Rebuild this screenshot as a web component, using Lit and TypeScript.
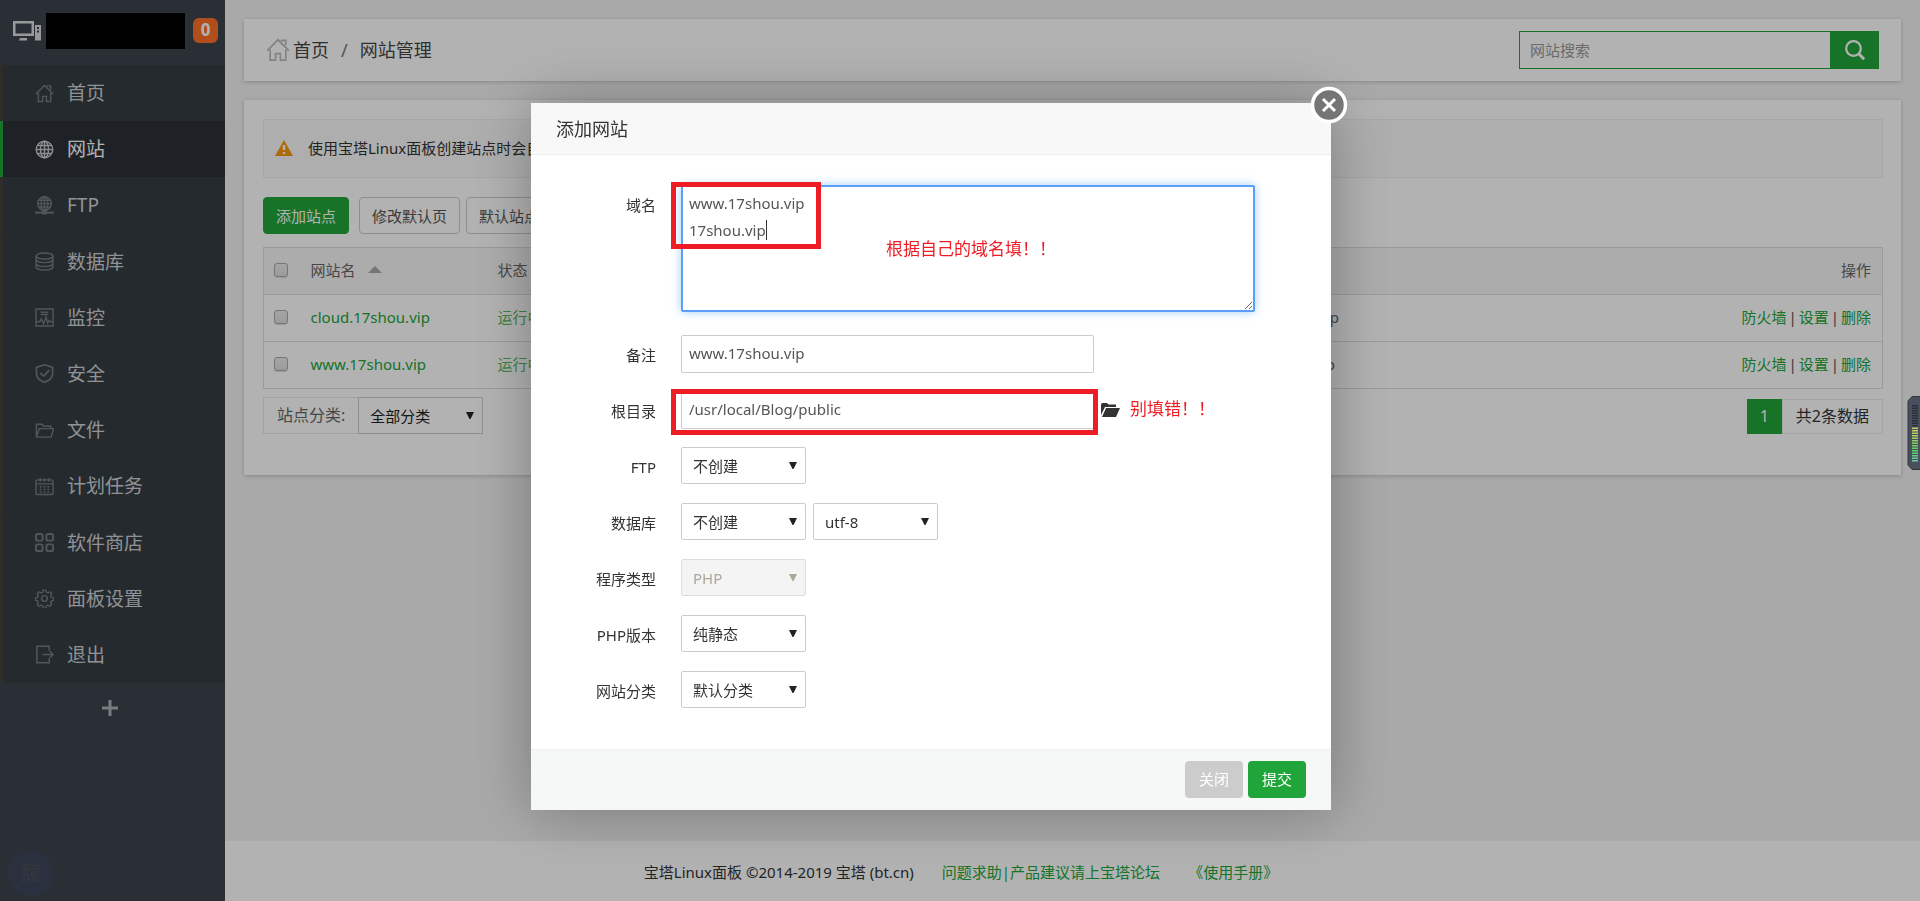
import { LitElement, html, svg, css } from "lit";
import { customElement, property } from "lit/decorators.js";

const icons: Record<string, unknown> = {
  home: svg`<path d="M1 10.500 10 1.500l9 9M3.500 9.500V18.500H8v-5.500h4v5.500h4.500V9.500M13 3V2h3.500v4"/>`,
  globe: svg`<circle cx="10" cy="10" r="8.700"/><ellipse cx="10" cy="10" rx="4.200" ry="8.700"/><path d="M10 1.300v17.400M1.300 10h17.400M3 5.700h14M3 14.300h14"/>`,
  ftp: svg`<circle cx="10" cy="8" r="7.200"/><ellipse cx="10" cy="8" rx="3.500" ry="7.200"/><path d="M10 1v14M3 8h14M4 4.500h12M4 11.500h12"/><path d="M0 17.500h20" stroke-width="2"/><path d="M7.500 17.500h5" stroke-width="4"/>`,
  db: svg`<ellipse cx="10" cy="4.200" rx="8.800" ry="3.200"/><path d="M1.200 4.200v11.600c0 1.800 3.900 3.200 8.800 3.200s8.800-1.400 8.800-3.200V4.200M1.200 8c0 1.800 3.900 3.200 8.800 3.200S18.800 9.800 18.800 8M1.200 12c0 1.800 3.900 3.200 8.800 3.200s8.800-1.400 8.800-3.200"/>`,
  monitor: svg`<path d="M1 1h18v18H1z"/><path d="M6 4.500h8M6 6.800h8"/><path d="M1 14.500h4l1.500-3 2.500 5 2.500-7 2 6.500 1.500-3 1.500 1.500H19"/>`,
  shield: svg`<path d="M10 .8 1.500 3.500V10c0 4.500 3.500 7.500 8.500 9.300 5-1.800 8.500-4.800 8.500-9.300V3.500zM5.500 9.500l3.700 3.300L15 6.500" stroke-width="1.800"/>`,
  folder: svg`<path d="M1.500 16.500V3.500h6l1.500 2h7.500V8M1.500 17 4.500 8h15L17 17z"/>`,
  calendar: svg`<rect x="1" y="3" width="18" height="15.500" rx="2"/><path d="M1 7.200h18M5.500 1v4M10 1v4M14.500 1v4"/><path d="M5 10.200h11M5 13h11M5 15.700h11" stroke-dasharray="2 2"/>`,
  apps: svg`<g stroke-width="2"><rect x="1" y="1" width="7" height="7" rx="2"/><rect x="12" y="1" width="7" height="7" rx="2"/><rect x="1" y="12" width="7" height="7" rx="2"/><rect x="12" y="12" width="7" height="7" rx="2"/></g>`,
  gear: svg`<circle cx="10" cy="10" r="3"/><path d="M8.500 1.200h3l.5 2.400 1.900.8 2.100-1.300 2.100 2.100-1.300 2.100.8 1.900 2.400.5v3l-2.400.5-.8 1.900 1.300 2.100-2.100 2.100-2.100-1.300-1.900.8-.5 2.400h-3l-.5-2.400-1.900-.8L4 19.300l-2.100-2.100 1.300-2.100-.8-1.900L0 12.700v-3l2.400-.5.8-1.900L1.900 5.200 4 3.100l2.100 1.300L8 3.600z" transform="translate(.5 0) scale(.95)"/>`,
  exit: svg`<path d="M15 6V1.200H2v17.600h13V14" stroke-width="1.600"/><path d="M8 10h11M15.500 6.500 19 10l-3.500 3.500" stroke-width="1.600"/>`,
};

const menu = [
  ["home", "首页"],
  ["globe", "网站"],
  ["ftp", "FTP"],
  ["db", "数据库"],
  ["monitor", "监控"],
  ["shield", "安全"],
  ["folder", "文件"],
  ["calendar", "计划任务"],
  ["apps", "软件商店"],
  ["gear", "面板设置"],
  ["exit", "退出"],
];

const base = css`
  :host {
    font-family: "Noto Sans", "Noto Sans CJK SC", sans-serif;
    font-size: 15px;
    line-height: 24px;
    color: #333;
  }
  *, *::before, *::after { box-sizing: border-box; }
  a { color: #20a53a; text-decoration: none; }
  button, input, select, textarea { font: inherit; margin: 0; }
  svg { display: block; }
`;

@customElement("drop-down")
class DropDown extends LitElement {
  @property() value = "";
  @property() name = "";
  @property({ type: Boolean }) disabled = false;
  @property({ type: Boolean }) square = false;

  static styles = [
    base,
    css`
      :host { display: block; width: 125px; }
      .wrap { position: relative; }
      .box {
        appearance: none;
        display: block;
        width: 100%;
        height: 37px;
        padding: 0 24px 0 11px;
        border: 1px solid #ccc;
        border-radius: 2px;
        background: #fff;
        color: #333;
        opacity: 1;
      }
      .square { border-radius: 0; color: #222; }
      .box:disabled { background: #f4f4f4; color: #aca899; border-color: #ddd; }
      .arrow {
        position: absolute;
        right: 9px;
        top: 15px;
        pointer-events: none;
        fill: #222;
      }
      .box:disabled + .arrow { fill: #aca899; }
    `,
  ];

  render() {
    return html`<div class="wrap">
      <select class="box ${this.square ? "square" : ""}" aria-label=${this.name} ?disabled=${this.disabled}>
        <option>${this.value}</option>
      </select>
      <svg class="arrow" width="8" height="7" viewBox="0 0 8 7"><path d="M0 0h8L4.500 7h-1z" /></svg>
    </div>`;
  }
}

@customElement("side-bar")
class SideBar extends LitElement {
  static styles = [
    base,
    css`
      :host {
        display: flex;
        flex-direction: column;
        background: #3c444d;
      }
      .top {
        display: flex;
        align-items: center;
        height: 65px;
        padding: 0 7px 4px 13px;
      }
      .host { flex: 1; height: 36px; margin: 0 8px 0 5px; background: #000; }
      .badge {
        width: 25px;
        height: 25px;
        border-radius: 6px;
        background: #ff7029;
        color: #fff;
        font-size: 17px;
        font-weight: 700;
        line-height: 23px;
        text-align: center;
      }
      .menu {
        display: grid;
        align-content: space-between;
        min-height: 618px;
        list-style: none;
        margin: 0;
        padding: 0;
        background: #353d44;
      }
      .item {
        display: flex;
        align-items: center;
        gap: 13px;
        height: 56px;
        padding-left: 32px;
        border-left: 3px solid #42413c;
        color: #cfd2d5;
        font-size: 19px;
      }
      .icon { fill: none; stroke: #767c81; stroke-width: 1.500; }
      .active { background: #2c3138; border-color: #20a53a; color: #fff; }
      .active .icon { stroke: #c8cacc; }
      .add {
        display: block;
        margin: 15px auto 0 102px;
        padding: 2px 0;
        border: 0;
        background: none;
      }
      .bubble {
        display: grid;
        place-items: center;
        width: 45px;
        height: 45px;
        margin: auto 0 5px 8px;
        border-radius: 50%;
        background: #3d465a;
        color: #4c5159;
        font-size: 20px;
      }
    `,
  ];

  render() {
    return html`
      <div class="top">
        <svg width="28" height="20" viewBox="0 0 28 20" fill="#dadcde">
          <path fill-rule="evenodd" d="M0 0h21v15H0zM2.500 2.500v10h16v-10zM7 17h7v2.500H6zM22 4h6v15.500h-6zM24 6v2h2V6zM24 9.500v2h2v-2z" />
        </svg>
        <span class="host"></span>
        <span class="badge">0</span>
      </div>
      <ul class="menu">
        ${menu.map(
          ([icon, label]) => html`<li>
            <a class="item ${icon === "globe" ? "active" : ""}" href="#">
              <svg class="icon" width="19" height="19" viewBox="0 0 20 20">${icons[icon]}</svg>${label}
            </a>
          </li>`
        )}
      </ul>
      <button class="add" aria-label="添加">
        <svg width="16" height="16" viewBox="0 0 16 16"><path d="M8 0v16M0 8h16" stroke="#aeb2b5" stroke-width="3" /></svg>
      </button>
      <span class="bubble">颓</span>
    `;
  }
}

@customElement("site-list")
class SiteList extends LitElement {
  static styles = [
    base,
    css`
      :host { display: block; }
      .panel { background: #fff; box-shadow: 0 1px 4px rgba(0, 0, 0, 0.2); }
      .bar {
        display: flex;
        align-items: center;
        height: 62px;
        padding: 0 22px 0 22px;
        margin-bottom: 19px;
        font-size: 18px;
      }
      .bar a { color: #444; }
      .slash { margin: 0 12px; color: #777; }
      .home { fill: none; stroke: #bbb; stroke-width: 1.400; margin-right: 3px; }
      .search { display: flex; width: 360px; height: 38px; margin-left: auto; }
      .query {
        flex: 1;
        min-width: 0;
        padding: 0 10px;
        border: 1px solid #20a53a;
        border-right: 0;
        background: #fff;
        font-size: 15px;
      }
      .query::placeholder { color: #999; }
      .go { display: grid; place-items: center; width: 49px; padding: 0 0 1px; border: 0; background: #20a53a; }
      .content { padding: 19px 18px 41px 19px; }
      .notice {
        display: flex;
        align-items: center;
        gap: 15px;
        height: 59px;
        padding: 0 11px 2px;
        border: 1px solid #f0f0f0;
        background: #fafafa;
        overflow: hidden;
        white-space: nowrap;
      }
      .tools { display: flex; gap: 6px; margin: 19px 0 13px; }
      .btn {
        height: 37px;
        padding: 0 12px;
        border: 1px solid #ccc;
        border-radius: 4px;
        background: #fff;
        color: #555;
      }
      .primary { margin-right: 4px; border-color: #20a53a; background: #20a53a; color: #fff; }
      .grid {
        width: 100%;
        border: 1px solid #ddd;
        border-collapse: collapse;
        table-layout: fixed;
      }
      th, td {
        height: 47px;
        padding: 0 8px 2px;
        border-bottom: 1px solid #ddd;
        font-weight: 400;
        text-align: left;
        color: #666;
      }
      th { background: #f6f6f6; }
      .pick { width: 39px; padding: 0 0 2px 10px; }
      .site { width: 187px; }
      .note { width: 371px; }
      .ops { width: 300px; padding-right: 11px; text-align: right; }
      .on { color: #5cb85c; }
      .sep { margin: 0 2px; color: #555; }
      .sort { display: inline-block; margin-left: 12px; vertical-align: 3px; fill: #aaa; }
      .tick {
        appearance: none;
        display: block;
        width: 14px;
        height: 14px;
        border: 1px solid #a8a8a8;
        border-radius: 3px;
        background: linear-gradient(#ededed, #dedede);
        box-shadow: 0 1px 1px #ddd;
      }
      .foot { display: flex; align-items: flex-start; margin-top: 8px; font-size: 16px; }
      .group { height: 37px; padding: 5px 13px; border: 1px solid #e8e8e8; border-right: 0; color: #666; }
      .pager { display: flex; margin: 2px 0 0 auto; line-height: 35px; }
      .page { width: 35px; background: #20a53a; color: #fff; text-align: center; }
      .total { padding: 0 13px; border: 1px solid #ececec; line-height: 33px; }
    `,
  ];

  row(name: string) {
    return html`<tr>
      <td class="pick"><input class="tick" type="checkbox" aria-label=${name} /></td>
      <td><a href="#">${name}</a></td>
      <td><a class="on" href="#">运行中</a></td>
      <td>${name}</td>
      <td class="ops"><a href="#">防火墙</a><span class="sep">|</span><a href="#">设置</a><span class="sep">|</span><a href="#">删除</a></td>
    </tr>`;
  }

  render() {
    return html`
      <nav class="panel bar">
        <svg class="home" width="24" height="24" viewBox="0 0 20 20">${icons.home}</svg>
        <a href="#">首页</a><span class="slash">/</span><a href="#">网站管理</a>
        <form class="search">
          <input class="query" type="text" placeholder="网站搜索" aria-label="网站搜索" />
          <button class="go" type="button" aria-label="搜索">
            <svg width="20" height="20" viewBox="0 0 20 20" fill="none" stroke="#fff" stroke-width="2.200"><circle cx="8.500" cy="8.500" r="7.300" /><path d="m14 14 5.200 5.200" stroke-width="3" /></svg>
          </button>
        </form>
      </nav>
      <section class="panel content">
        <div class="notice">
          <svg width="18" height="16" viewBox="0 0 18 16"><path d="M9 0 18 16H0z" fill="#f89a10" /><path d="M9 5v5M9 12v2" stroke="#fff" stroke-width="2.400" /></svg>
          使用宝塔Linux面板创建站点时会自动创建权限
        </div>
        <div class="tools">
          <button class="btn primary">添加站点</button><button class="btn">修改默认页</button><button class="btn">默认站点</button>
        </div>
        <table class="grid">
          <thead>
            <tr>
              <th class="pick"><input class="tick" type="checkbox" aria-label="全选" /></th>
              <th class="site">网站名<svg class="sort" width="14" height="7" viewBox="0 0 14 7"><path d="M7 0l7 7H0z" /></svg></th>
              <th>状态</th>
              <th class="note">备注</th>
              <th class="ops">操作</th>
            </tr>
          </thead>
          <tbody>
            ${this.row("cloud.17shou.vip")} ${this.row("www.17shou.vip")}
          </tbody>
        </table>
        <div class="foot">
          <span class="group">站点分类:</span>
          <drop-down square name="站点分类" value="全部分类"></drop-down>
          <div class="pager"><span class="page">1</span><span class="total">共2条数据</span></div>
        </div>
      </section>
    `;
  }
}

@customElement("add-site-dialog")
class AddSiteDialog extends LitElement {
  static styles = [
    base,
    css`
      :host {
        display: block;
        width: 800px;
        background: #fff;
        border-radius: 2px;
        box-shadow: 1px 1px 62px rgba(0, 0, 0, 0.3);
      }
      .title {
        margin: 0;
        padding: 14px 25px 13px;
        border-bottom: 1px solid #eee;
        background: #f8f8f8;
        font-size: 18px;
        font-weight: 400;
      }
      .close {
        position: absolute;
        top: -17px;
        right: -17px;
        padding: 0;
        border: 0;
        border-radius: 50%;
        background: none;
      }
      .form { display: grid; grid-auto-rows: minmax(38px, auto); gap: 18px; padding: 30px 0 40px; }
      .row { display: grid; grid-template-columns: 125px 1fr; column-gap: 25px; align-items: start; }
      .label { padding-top: 8px; text-align: right; }
      .field { position: relative; display: flex; gap: 7px; }
      .text {
        width: 413px;
        height: 38px;
        padding: 0 7px 2px;
        border: 1px solid #ccc;
        border-radius: 2px;
        color: #555;
      }
      .area {
        display: block;
        width: 574px;
        height: 127px;
        margin-bottom: 5px;
        padding: 3px 6px;
        border: 2px solid #5b9dfa;
        border-radius: 2px;
        box-shadow: 0 0 10px rgba(102, 175, 233, 0.6);
        outline: none;
        resize: both;
        line-height: 27px;
        color: #555;
      }
      .folder { display: grid; align-content: center; padding: 0; border: 0; background: none; }
      .caret { position: absolute; left: 85px; top: 35px; width: 1px; height: 20px; background: #333; }
      .mark { position: absolute; border: 5px solid #ee1c24; pointer-events: none; }
      .mark-domain { left: -10px; top: -3px; width: 150px; height: 67px; }
      .mark-path { left: -10px; top: -2px; width: 427px; height: 46px; }
      .hint { color: #ee1c24; font-size: 17px; line-height: 36px; padding-left: 3px; }
      .hint-domain { position: absolute; left: 202px; top: 46px; }
      .actions {
        display: flex;
        justify-content: flex-end;
        gap: 5px;
        padding: 11px 25px 12px;
        border-top: 1px solid #edf1f2;
        background: #f6f8f8;
      }
      .btn { height: 37px; padding: 0 14px 2px; border: 0; border-radius: 4px; background: #ccc; color: #fff; }
      .submit { background: #20a53a; }
    `,
  ];

  pick(label: string, values: string[], disabled = false) {
    return html`<div class="row">
      <span class="label">${label}</span>
      <div class="field">
        ${values.map((v) => html`<drop-down name=${label} value=${v} ?disabled=${disabled}></drop-down>`)}
      </div>
    </div>`;
  }

  render() {
    return html`
      <h2 class="title">添加网站</h2>
      <button class="close" aria-label="关闭窗口">
        <svg width="38" height="38" viewBox="0 0 38 38">
          <circle cx="19" cy="19" r="16.500" fill="#757575" stroke="#fff" stroke-width="3.500" />
          <path d="m13 13 12 12M25 13 13 25" stroke="#fff" stroke-width="3" />
        </svg>
      </button>
      <form class="form">
        <div class="row">
          <label class="label" for="domain">域名</label>
          <div class="field">
            <textarea class="area" id="domain" .value=${"www.17shou.vip\n17shou.vip"}></textarea>
            <span class="caret"></span>
            <span class="mark mark-domain"></span>
            <span class="hint hint-domain">根据自己的域名填！！</span>
          </div>
        </div>
        <div class="row">
          <label class="label" for="note">备注</label>
          <div class="field"><input class="text" id="note" type="text" value="www.17shou.vip" /></div>
        </div>
        <div class="row">
          <label class="label" for="path">根目录</label>
          <div class="field">
            <input class="text" id="path" type="text" value="/usr/local/Blog/public" />
            <span class="mark mark-path"></span>
            <button class="folder" type="button" aria-label="选择目录">
              <svg width="19" height="14" viewBox="0 0 19 14" fill="#333"><path d="M0 12V1.500L1 0h5l1.500 1.500H15V4H4zM5 5h14l-4 9H1z" /></svg>
            </button>
            <span class="hint">别填错！！</span>
          </div>
        </div>
        ${this.pick("FTP", ["不创建"])} ${this.pick("数据库", ["不创建", "utf-8"])}
        ${this.pick("程序类型", ["PHP"], true)} ${this.pick("PHP版本", ["纯静态"])}
        ${this.pick("网站分类", ["默认分类"])}
      </form>
      <div class="actions">
        <button class="btn" type="button">关闭</button>
        <button class="btn submit" type="button">提交</button>
      </div>
    `;
  }
}

@customElement("app-root")
class AppRoot extends LitElement {
  static styles = [
    base,
    css`
      :host {
        display: grid;
        grid-template-columns: 225px 1fr;
        min-height: 100vh;
        background: #f2f2f2;
      }
      .main { display: flex; flex-direction: column; min-width: 0; }
      .list { margin: 19px 19px 0; }
      .footer {
        display: flex;
        justify-content: center;
        gap: 28px;
        margin-top: auto;
        padding: 19px 223px 17px 0;
        background: #fff;
      }
      .shade { position: fixed; inset: 0; background: rgba(0, 0, 0, 0.3); }
      .dialog { position: fixed; left: calc(50% - 429px); top: 103px; }
      .meter { position: fixed; right: 0; top: 396px; }
    `,
  ];

  render() {
    const ticks = Array.from({ length: 23 }, (_, i) => i);
    return html`
      <side-bar></side-bar>
      <div class="main">
        <site-list class="list"></site-list>
        <footer class="footer">
          <span>宝塔Linux面板 ©2014-2019 宝塔 (bt.cn)</span>
          <a href="#">问题求助|产品建议请上宝塔论坛</a>
          <a href="#">《使用手册》</a>
        </footer>
      </div>
      <div class="shade"></div>
      <add-site-dialog class="dialog" role="dialog" aria-label="添加网站"></add-site-dialog>
      <svg class="meter" width="13" height="74" viewBox="0 0 13 74">
        <path d="M14 .5H5L1 5v64l4 4.500h9z" fill="#4a4f5e" stroke="#33363f" />
        ${ticks.map((i) => {
          const color = i < 9 ? "#2c2f38" : `hsl(${55 + (i - 9) * 8}, 55%, 60%)`;
          return svg`<rect x="5" y=${9 + i * 2.5} width="6" height="1.500" fill=${color} />`;
        })}
      </svg>
    `;
  }
}
